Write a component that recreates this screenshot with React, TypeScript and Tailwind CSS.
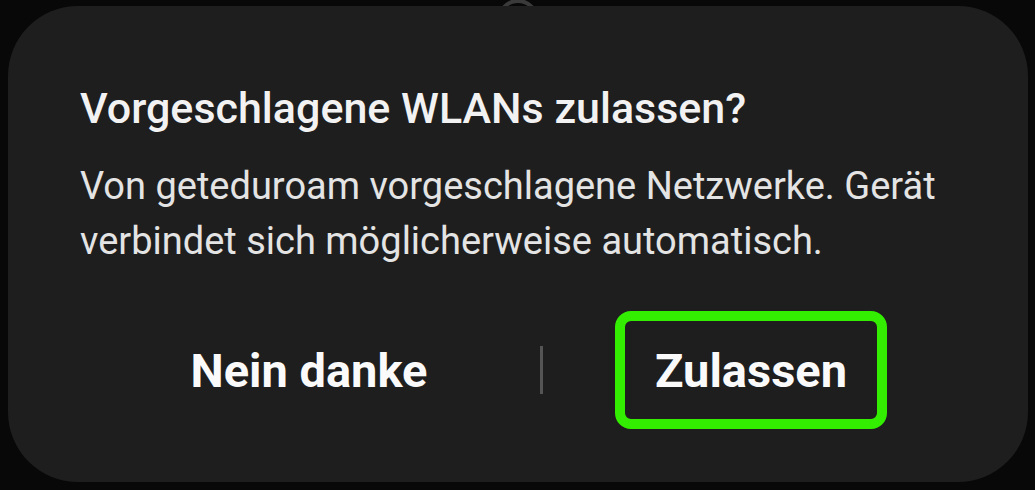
import React from "react";

export default function App() {
  return (
    <div
      className="relative w-[1035px] h-[490px] bg-[#080808] overflow-hidden"
      style={{ fontFamily: "Roboto, 'Noto Sans', sans-serif" }}
    >
      <svg className="absolute left-[496px] top-[-2px]" width="44" height="44" viewBox="0 0 44 44">
        <circle cx="22" cy="22" r="19" fill="none" stroke="#3a3a3a" strokeWidth="4" />
      </svg>
      <div className="relative ml-[8px] mt-[6px] w-[1020px] h-[476px] bg-[#1e1e1e] rounded-[70px] px-[72px] pt-[76px] flex flex-col">
        <h1 className="text-[43px] leading-[52px] font-medium text-[#f2f2f2]">
          Vorgeschlagene WLANs zulassen?
        </h1>
        <p className="mt-[25px] text-[38px] leading-[55px] text-[#e4e4e4]">
          Von geteduroam vorgeschlagene Netzwerke. Gerät
          <br />
          verbindet sich möglicherweise automatisch.
        </p>
        <div className="mt-[42px] ml-[-2px] w-[881px] flex items-center">
          <div className="w-[462px] flex justify-center">
            <span className="text-[47px] font-bold text-[#fafafa] leading-none">Nein danke</span>
          </div>
          <div className="w-[3px] h-[48px] bg-[#555555]" />
          <div className="w-[416px] flex justify-center">
            <div className="w-[272px] h-[118px] border-[10px] border-[#33ee00] rounded-[16px] flex items-center justify-center">
              <span className="text-[47px] font-bold text-[#fafafa] leading-none">Zulassen</span>
            </div>
          </div>
        </div>
      </div>
    </div>
  );
}
